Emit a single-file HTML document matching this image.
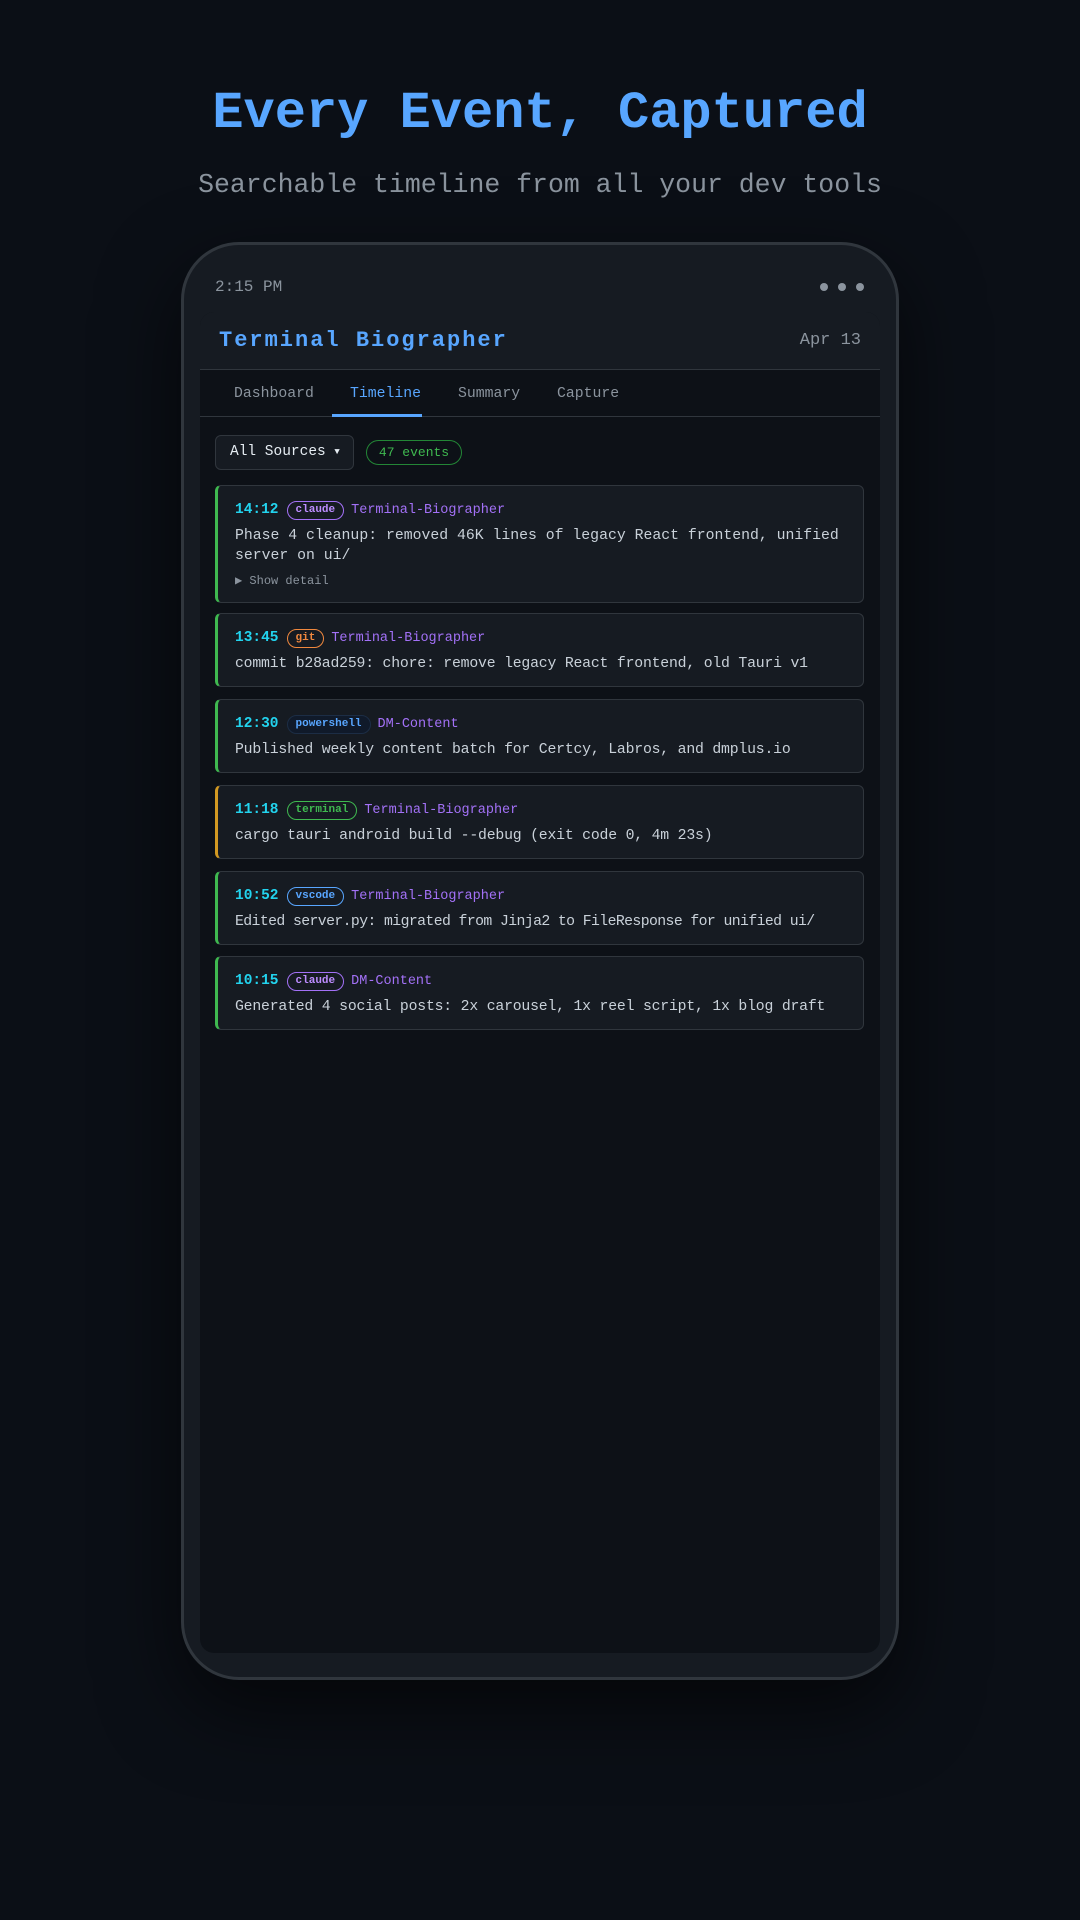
<!DOCTYPE html>
<html><head><meta charset="utf-8"><style>
*{box-sizing:border-box;margin:0;padding:0}
body{width:1080px;height:1920px;background:#0b0f16;font-family:"Liberation Mono",monospace;color:#c9d1d9;position:relative;overflow:hidden}
.h1{position:absolute;top:82px;left:0;width:1080px;text-align:center;font-size:52px;font-weight:bold;color:#58a6ff;line-height:64px}
.sub{position:absolute;top:167px;left:0;width:1080px;text-align:center;font-size:26.5px;color:#8b949e;line-height:36px}
.phone{position:absolute;left:181px;top:242px;width:718px;height:1438px;border:3px solid #30363d;border-radius:58px;background:#161b22;box-shadow:0 30px 80px rgba(0,0,0,.6)}
.screen{position:absolute;left:200px;top:312px;width:680px;height:1341px;background:#0d1117;border-radius:14px;overflow:hidden}
.abs{position:absolute}
.status{left:215px;top:278px;font-size:16px;color:#8b949e}
.dot{width:8px;height:8px;border-radius:50%;background:#8b949e;top:283px}
.hdr{left:0;top:0;width:680px;height:58px;background:#161b22;border-bottom:1px solid #30363d}
.title{left:19px;top:16px;font-size:22px;font-weight:bold;letter-spacing:2px;color:#58a6ff}
.date{right:19px;top:19px;font-size:17px;color:#8b949e}
.tabs{left:0;top:58px;width:680px;height:47px;border-bottom:1px solid #30363d}
.tab{top:16px;font-size:14.8px;color:#8b949e}
.card{position:absolute;left:15px;width:649px;background:#161b22;border:1px solid #30363d;border-left:3px solid #3fb950;border-radius:6px}
.row{position:absolute;left:17px;top:14px;white-space:nowrap;display:flex;align-items:center;height:20px}
.time{font-size:14.5px;font-weight:bold;color:#22d3ee;margin-right:8px}
.badge{font-size:11px;font-weight:bold;border:1px solid;border-radius:10px;padding:0 8px;height:19px;line-height:17px;margin-right:7px}
.proj{font-size:13.5px;color:#a371f7}
.txt{position:absolute;left:17px;top:40px;font-size:14.8px;line-height:20px;color:#c9d1d9;width:620px}
.one{white-space:nowrap;width:640px;letter-spacing:-0.2px}
</style></head><body>
<div class="h1">Every Event, Captured</div>
<div class="sub">Searchable timeline from all your dev tools</div>
<div class="phone"></div>
<div class="abs status">2:15 PM</div>
<div class="abs dot" style="left:820px"></div><div class="abs dot" style="left:856px"></div><div class="abs dot" style="left:838px"></div>
<div class="screen">
 <div class="abs hdr"><div class="abs title">Terminal Biographer</div><div class="abs date">Apr 13</div></div>
 <div class="abs tabs">
  <div class="abs tab" style="left:34px">Dashboard</div>
  <div class="abs tab" style="left:150px;color:#58a6ff">Timeline</div>
  <div class="abs tab" style="left:258px">Summary</div>
  <div class="abs tab" style="left:357px">Capture</div>
  <div class="abs" style="left:132px;top:44px;width:90px;height:3px;background:#58a6ff"></div>
 </div>
 <div class="abs" style="left:15px;top:123px;width:139px;height:35px;border:1px solid #30363d;border-radius:6px;background:#161b22;font-size:14.5px;line-height:33px;padding-left:14px;color:#e6edf3">All Sources <span style="font-size:9px;vertical-align:1px">▼</span></div>
 <div class="abs" style="left:166px;top:128px;width:96px;height:25px;border:1px solid #238636;border-radius:13px;font-size:13px;line-height:23px;text-align:center;color:#3fb950">47 events</div>

 <div class="card" style="top:173px;height:118px">
  <div class="row"><span class="time">14:12</span><span class="badge" style="color:#bc8cff;border-color:#a371f7">claude</span><span class="proj">Terminal-Biographer</span></div>
  <div class="txt">Phase 4 cleanup: removed 46K lines of legacy React frontend, unified server on ui/</div>
  <div class="abs" style="left:17px;top:87px;font-size:12px;color:#8b949e">▶ Show detail</div>
 </div>
 <div class="card" style="top:301px;height:74px">
  <div class="row"><span class="time">13:45</span><span class="badge" style="color:#f0883e;border-color:#f0883e">git</span><span class="proj">Terminal-Biographer</span></div>
  <div class="txt one">commit b28ad259: chore: remove legacy React frontend, old Tauri v1</div>
 </div>
 <div class="card" style="top:387px;height:74px">
  <div class="row"><span class="time">12:30</span><span class="badge" style="color:#58a6ff;border-color:#1c2d45;background:#101a2a">powershell</span><span class="proj">DM-Content</span></div>
  <div class="txt one">Published weekly content batch for Certcy, Labros, and dmplus.io</div>
 </div>
 <div class="card" style="top:473px;height:74px;border-left-color:#d29922">
  <div class="row"><span class="time">11:18</span><span class="badge" style="color:#3fb950;border-color:#3fb950">terminal</span><span class="proj">Terminal-Biographer</span></div>
  <div class="txt one">cargo tauri android build --debug (exit code 0, 4m 23s)</div>
 </div>
 <div class="card" style="top:559px;height:74px">
  <div class="row"><span class="time">10:52</span><span class="badge" style="color:#58a6ff;border-color:#58a6ff">vscode</span><span class="proj">Terminal-Biographer</span></div>
  <div class="txt one" style="letter-spacing:-0.6px">Edited server.py: migrated from Jinja2 to FileResponse for unified ui/</div>
 </div>
 <div class="card" style="top:644px;height:74px">
  <div class="row"><span class="time">10:15</span><span class="badge" style="color:#bc8cff;border-color:#a371f7">claude</span><span class="proj">DM-Content</span></div>
  <div class="txt one">Generated 4 social posts: 2x carousel, 1x reel script, 1x blog draft</div>
 </div>
</div>
</body></html>
